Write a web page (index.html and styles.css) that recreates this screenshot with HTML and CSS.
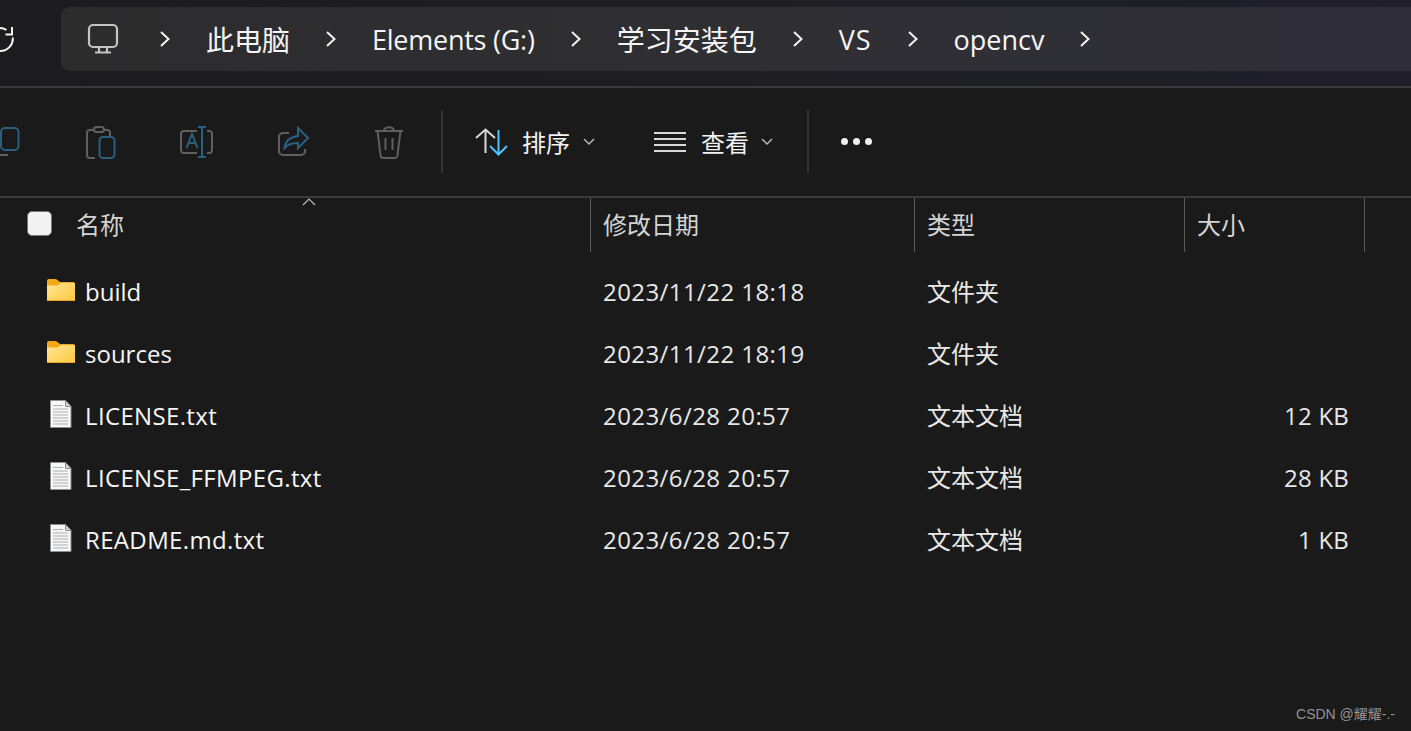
FILE: index.html
```html
<!DOCTYPE html>
<html lang="zh-CN">
<head>
<meta charset="utf-8">
<title>opencv</title>
<link rel="stylesheet" href="styles.css">
</head>
<body>
<svg class="defs" width="0" height="0" aria-hidden="true">
  <defs>
    <linearGradient id="folderBody" x1="0" y1="0" x2="1" y2="1">
      <stop offset="0" stop-color="#ffe596"/>
      <stop offset="1" stop-color="#ffc83f"/>
    </linearGradient>
  </defs>
</svg>
<div class="window">
  <header class="topbar">
    <div class="refresh">
      <svg width="14" height="28" viewBox="0 0 14 28" class="line white"><path d="M0 3a11.500 11.500 0 0 1 6.500 2"/><path d="M12 2v7.500H5.500"/><path d="M12.800 12.500a12.500 12.500 0 0 1-12.800 13.500"/></svg>
    </div>
    <nav class="crumbs">
      <svg class="monitor" width="32" height="32" viewBox="0 0 32 32"><rect x="2" y="2" width="28" height="22" rx="4"/><path d="M12 24v5M20 24v5M8 29.500h16"/></svg>
      <svg class="chev" width="10" height="16" viewBox="0 0 10 16"><path d="M1 1l7.500 7L1 15"/></svg>
      <span class="cjk-crumb">此电脑</span>
      <svg class="chev" width="10" height="16" viewBox="0 0 10 16"><path d="M1 1l7.500 7L1 15"/></svg>
      <span class="drive">Elements (G:)</span>
      <svg class="chev" width="10" height="16" viewBox="0 0 10 16"><path d="M1 1l7.500 7L1 15"/></svg>
      <span class="cjk-crumb">学习安装包</span>
      <svg class="chev" width="10" height="16" viewBox="0 0 10 16"><path d="M1 1l7.500 7L1 15"/></svg>
      <span class="vs">VS</span>
      <svg class="chev" width="10" height="16" viewBox="0 0 10 16"><path d="M1 1l7.500 7L1 15"/></svg>
      <span>opencv</span>
      <svg class="chev" width="10" height="16" viewBox="0 0 10 16"><path d="M1 1l7.500 7L1 15"/></svg>
    </nav>
  </header>

  <section class="toolbar">
    <div class="tool tool-copy">
      <svg width="36" height="36" viewBox="0 0 36 36" class="line"><rect class="blue" x="14" y="4" width="17.500" height="22" rx="4"/><path class="gray" d="M9 26c0 3 2 5 5 5h7"/></svg>
    </div>
    <div class="tool">
      <svg width="36" height="36" viewBox="0 0 36 36" class="line"><path class="gray" d="M11 6H7a3 3 0 0 0-3 3v22a3 3 0 0 0 3 3h5"/><path class="gray" d="M21 6h3a3 3 0 0 1 3 3v3"/><rect class="gray" x="11" y="3" width="10" height="5" rx="2.500"/><rect class="blue" x="16.500" y="13" width="15" height="21" rx="3.500"/></svg>
    </div>
    <div class="tool">
      <svg width="36" height="36" viewBox="0 0 36 36" class="line"><path class="gray" d="M18 7H5a3 3 0 0 0-3 3v16a3 3 0 0 0 3 3h13"/><path class="gray" d="M28 7h2a3 3 0 0 1 3 3v16a3 3 0 0 1-3 3h-2"/><path class="blue" d="M19 3h8M19 33h8M23 3v30M7.500 24L13 10l5.500 14M9.500 19h7"/></svg>
    </div>
    <div class="tool">
      <svg width="36" height="36" viewBox="0 0 36 36" class="line"><path class="gray" d="M14 9H8a4 4 0 0 0-4 4v14a4 4 0 0 0 4 4h18a4 4 0 0 0 4-4v-2"/><path class="blue" d="M23 4l10 10-10 10v-5c-6 0-10 1-13.500 5 1-8 6-11 13.500-12z"/></svg>
    </div>
    <div class="tool">
      <svg width="36" height="36" viewBox="0 0 36 36" class="line"><path class="gray" d="M4 7h28M6.500 7l3 24a3 3 0 0 0 3 3h11a3 3 0 0 0 3-3l3-24M13 7c0-5 10-5 10 0M14.500 14v12M21.500 14v12"/></svg>
    </div>
    <div class="sep"></div>
    <div class="action action-sort">
      <svg width="34" height="28" viewBox="0 0 34 28"><path class="stroke-white" d="M1 10L10.500 1.500 20 10M10.500 1.500V25"/><path class="stroke-sky" d="M15 18l8.500 8.500L32 18M23.500 26.500V2"/></svg>
      <span class="action-text">排序</span>
      <svg class="mini" width="12" height="8" viewBox="0 0 12 8"><path d="M1 1l5 5 5-5"/></svg>
    </div>
    <div class="action action-view">
      <svg width="32" height="22" viewBox="0 0 32 22"><path class="stroke-white" d="M0 2h32M0 8h32M0 14h32M0 20h32"/></svg>
      <span class="action-text">查看</span>
      <svg class="mini" width="12" height="8" viewBox="0 0 12 8"><path d="M1 1l5 5 5-5"/></svg>
    </div>
    <div class="sep sep-second"></div>
    <div class="more"><i></i><i></i><i></i></div>
  </section>

  <section class="list">
    <div class="row head">
      <div class="cell name-head">
        <span class="check"></span>
        <span>名称</span>
        <svg class="sort-up" width="14" height="8" viewBox="0 0 14 8"><path d="M1 7l6-6 6 6"/></svg>
      </div>
      <div class="cell">修改日期</div>
      <div class="cell">类型</div>
      <div class="cell last">大小</div>
    </div>

    <div class="row">
      <div class="cell name">
        <svg class="folder" width="28" height="22" viewBox="0 0 28 22"><path class="tab" d="M0 2a2 2 0 0 1 2-2h7l4 3h13a2 2 0 0 1 2 2v3H0z"/><path class="body" d="M0 6.500h10.500l3.500-2.500h13a1 1 0 0 1 1 1V21a1 1 0 0 1-1 1H1a1 1 0 0 1-1-1z"/><path class="edge" d="M0 21.500h28"/></svg>
        <span>build</span>
      </div>
      <div class="cell num">2023/11/22 18:18</div>
      <div class="cell kind">文件夹</div>
      <div class="cell size"></div>
    </div>
    <div class="row">
      <div class="cell name">
        <svg class="folder" width="28" height="22" viewBox="0 0 28 22"><path class="tab" d="M0 2a2 2 0 0 1 2-2h7l4 3h13a2 2 0 0 1 2 2v3H0z"/><path class="body" d="M0 6.500h10.500l3.500-2.500h13a1 1 0 0 1 1 1V21a1 1 0 0 1-1 1H1a1 1 0 0 1-1-1z"/><path class="edge" d="M0 21.500h28"/></svg>
        <span>sources</span>
      </div>
      <div class="cell num">2023/11/22 18:19</div>
      <div class="cell kind">文件夹</div>
      <div class="cell size"></div>
    </div>
    <div class="row">
      <div class="cell name">
        <svg class="doc" width="22" height="28" viewBox="0 0 22 28"><path class="sheet" d="M.5.500h15l5.500 6v21H.5z"/><path class="fold" d="M15.500.500v6h5.500z"/><path class="lines" d="M3 5.500h10M3 9h15M3 12h15M3 15h15M3 18h15M3 21h15M3 24h15"/></svg>
        <span class="file-name">LICENSE.txt</span>
      </div>
      <div class="cell num">2023/6/28 20:57</div>
      <div class="cell kind">文本文档</div>
      <div class="cell size">12 KB</div>
    </div>
    <div class="row">
      <div class="cell name">
        <svg class="doc" width="22" height="28" viewBox="0 0 22 28"><path class="sheet" d="M.5.500h15l5.500 6v21H.5z"/><path class="fold" d="M15.500.500v6h5.500z"/><path class="lines" d="M3 5.500h10M3 9h15M3 12h15M3 15h15M3 18h15M3 21h15M3 24h15"/></svg>
        <span class="file-name">LICENSE_FFMPEG.txt</span>
      </div>
      <div class="cell num">2023/6/28 20:57</div>
      <div class="cell kind">文本文档</div>
      <div class="cell size">28 KB</div>
    </div>
    <div class="row">
      <div class="cell name">
        <svg class="doc" width="22" height="28" viewBox="0 0 22 28"><path class="sheet" d="M.5.500h15l5.500 6v21H.5z"/><path class="fold" d="M15.500.500v6h5.500z"/><path class="lines" d="M3 5.500h10M3 9h15M3 12h15M3 15h15M3 18h15M3 21h15M3 24h15"/></svg>
        <span class="file-name">README.md.txt</span>
      </div>
      <div class="cell num">2023/6/28 20:57</div>
      <div class="cell kind">文本文档</div>
      <div class="cell size">1 KB</div>
    </div>
  </section>

  <div class="watermark">CSDN @耀耀-.-</div>
</div>
</body>
</html>
```
FILE: styles.css
```css
* { box-sizing: border-box; }
html, body { margin: 0; height: 100%; overflow: hidden; }
body {
  background: #1a1a1a;
  color: #fff;
  font-family: "Open Sans", "Noto Sans", "Noto Sans CJK SC", sans-serif;
}
.defs { position: absolute; }
.window { position: relative; width: 1411px; height: 731px; overflow: hidden; }

/* top bar */
.topbar {
  height: 88px;
  padding: 7px 0 15px 0;
  display: flex;
  background: linear-gradient(90deg, #1c1c1e 0%, #1e1e22 50%, #1f1e2a 100%);
  border-bottom: 2px solid #3a3a3a;
}
.refresh { width: 61px; flex: none; display: flex; align-items: center; }
.line { fill: none; stroke-width: 2; }
.white { stroke: #f2f2f2; }
.crumbs {
  flex: 1;
  min-width: 0;
  padding-left: 26px;
  display: flex;
  align-items: center;
  gap: 36px;
  background: linear-gradient(90deg, #2c2c2d 0%, #2f2f33 50%, #2f2e39 100%);
  border-radius: 9px 0 0 9px;
  font-size: 27px;
  color: #f5f5f5;
  white-space: nowrap;
}
.cjk-crumb { font-size: 28px; }
.drive { letter-spacing: -0.25px; }
.vs { letter-spacing: 1px; }
.monitor { fill: none; stroke: #c4c4c4; stroke-width: 2.200; margin-right: 5px; flex: none; }
.chev { fill: none; stroke: #f2f2f2; stroke-width: 2; flex: none; }

/* toolbar */
.toolbar {
  height: 110px;
  display: flex;
  align-items: center;
  border-bottom: 2px solid #3a3a3a;
  padding-bottom: 1px;
}
.tool { width: 96px; flex: none; display: flex; justify-content: center; }
.tool-copy { margin-left: -43px; }
.blue { stroke: #2a5f80; }
.gray { stroke: #5f5f5f; }
.sep { width: 2px; height: 63px; background: #333; margin-left: 4px; flex: none; }
.action { display: flex; align-items: center; flex: none; }
.action-text { font-size: 24px; color: #f2f2f2; line-height: 1; margin-top: 2px; }
.action-sort { margin-left: 32px; gap: 13px; }
.action-view { margin-left: 59px; gap: 15px; }
.action-view .mini { margin-left: -3px; }
.mini { fill: none; stroke: #b8b8b8; stroke-width: 1.500; }
.stroke-white { fill: none; stroke: #d8d8d8; stroke-width: 2; }
.stroke-sky { fill: none; stroke: #4cc2ff; stroke-width: 2; }
.sep-second { margin-left: 34px; }
.more { display: flex; gap: 5px; margin-left: 32px; }
.more i { width: 7px; height: 7px; border-radius: 50%; background: #f0f0f0; display: block; }

/* list */
.row {
  display: grid;
  grid-template-columns: 591px 324px 270px 180px;
  height: 62px;
  align-items: center;
  font-size: 24px;
  color: #e8e8e8;
}
.row.head {
  grid-template-columns: 590px 324px 270px 181px;
  height: 54px;
  color: #d4d4d4;
  margin-bottom: 8px;
}
.head .cell { border-left: 1px solid #5a5a5a; height: 54px; padding-left: 12px; padding-bottom: 3px; display: flex; align-items: center; }
.head .last { border-right: 1px solid #5a5a5a; }
.row .cell { white-space: nowrap; }
.row > .cell { padding-left: 12px; }
.head .name-head { border-left: 0; padding-left: 27px; position: relative; }
.check {
  width: 25px; height: 25px;
  border-radius: 5px;
  background: #f3f3f3;
  border: 1px solid #777;
  margin-right: 24px;
}
.sort-up { position: absolute; left: 302px; top: 0; fill: none; stroke: #bbb; stroke-width: 1.200; }
.row > .name { padding-left: 47px; display: flex; align-items: center; gap: 10px; color: #f6f6f6; }
.num { letter-spacing: 0.42px; }
.row > .kind { padding-bottom: 2px; }
.row > .size { text-align: right; padding-right: 16px; padding-left: 0; letter-spacing: 0.2px; }
.file-name { letter-spacing: 0.35px; }
.folder { margin-bottom: 3px; flex: none; }
.doc { margin-left: 3px; margin-right: 3px; margin-bottom: 2px; flex: none; }
.tab { fill: #f2a918; }
.body { fill: url(#folderBody); }
.edge { fill: none; stroke: #e9a72a; }
.sheet { fill: #f6f6f6; stroke: #8e8e8e; }
.fold { fill: #d4d4d4; stroke: #8e8e8e; }
.lines { fill: none; stroke: #a9b0b4; }

.watermark {
  position: absolute;
  right: 16px;
  bottom: 8px;
  font-family: "Liberation Sans", "Noto Sans CJK SC", sans-serif;
  font-size: 14px;
  color: #949494;
}
```
